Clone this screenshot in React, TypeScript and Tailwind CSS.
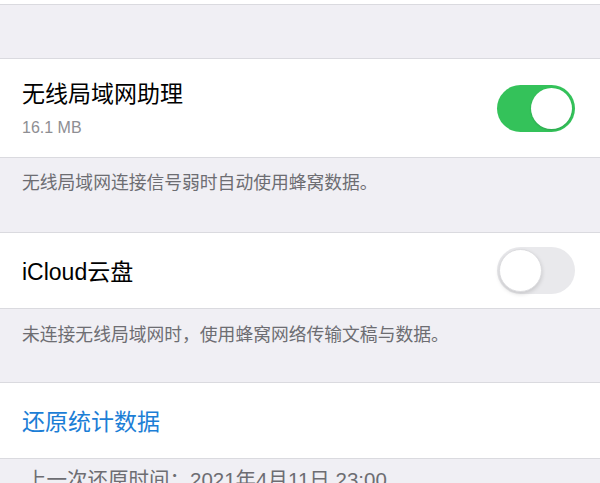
const font = { fontFamily: '"Liberation Sans", "Noto Sans CJK SC", sans-serif' };

const Toggle = ({ on }: { on: boolean }) =>
  on ? (
    <div className="w-[78px] h-[47px] rounded-full bg-[#34c25a] p-[3px] flex justify-end">
      <div className="w-[41px] h-[41px] rounded-full bg-white shadow-[0_1px_2px_rgba(0,0,0,0.15)]" />
    </div>
  ) : (
    <div className="w-[78px] h-[47px] rounded-full bg-[#e9e9ec] p-[2px] flex justify-start">
      <div className="w-[43px] h-[43px] rounded-full bg-white border border-[#dcdcdf] shadow-[0_2px_4px_rgba(0,0,0,0.15)]" />
    </div>
  );

const Divider = () => <div className="h-px bg-[#dadadf]" />;

export default function App() {
  return (
    <div className="w-[600px] h-[483px] overflow-hidden bg-[#f0eff4]" style={font}>
      <div className="h-[4px] bg-white" />
      <Divider />
      <div className="h-[53px]" />
      <Divider />

      <div className="h-[98px] bg-white flex items-center justify-between pl-[22px] pr-[25px]">
        <div className="flex flex-col gap-[9px]">
          <span className="text-[23px] leading-[30px] text-black">无线局域网助理</span>
          <span className="text-[16px] leading-[20px] text-[#8e8e93]">16.1 MB</span>
        </div>
        <Toggle on />
      </div>
      <Divider />

      <div className="h-[74px] pl-[22px] pt-[13px]">
        <p className="text-[17.8px] leading-[24px] text-[#6d6d72]">无线局域网连接信号弱时自动使用蜂窝数据。</p>
      </div>
      <Divider />

      <div className="h-[75px] bg-white flex items-center justify-between pl-[22px] pr-[25px]">
        <span className="text-[23px] leading-[30px] text-black pt-[3px]">iCloud云盘</span>
        <Toggle on={false} />
      </div>
      <Divider />

      <div className="h-[73px] pl-[22px] pt-[14px]">
        <p className="text-[17.8px] leading-[24px] text-[#6d6d72]">未连接无线局域网时，使用蜂窝网络传输文稿与数据。</p>
      </div>
      <Divider />

      <div className="h-[75px] bg-white flex items-center pl-[22px]">
        <span className="text-[23px] leading-[30px] text-[#1c7ed6] pt-[3px]">还原统计数据</span>
      </div>
      <Divider />

      <div className="pl-[26px] pt-[9px]">
        <p className="text-[20.5px] leading-[24px] text-[#6d6d72] whitespace-nowrap">上一次还原时间：2021年4月11日 23:00</p>
      </div>
    </div>
  );
}
